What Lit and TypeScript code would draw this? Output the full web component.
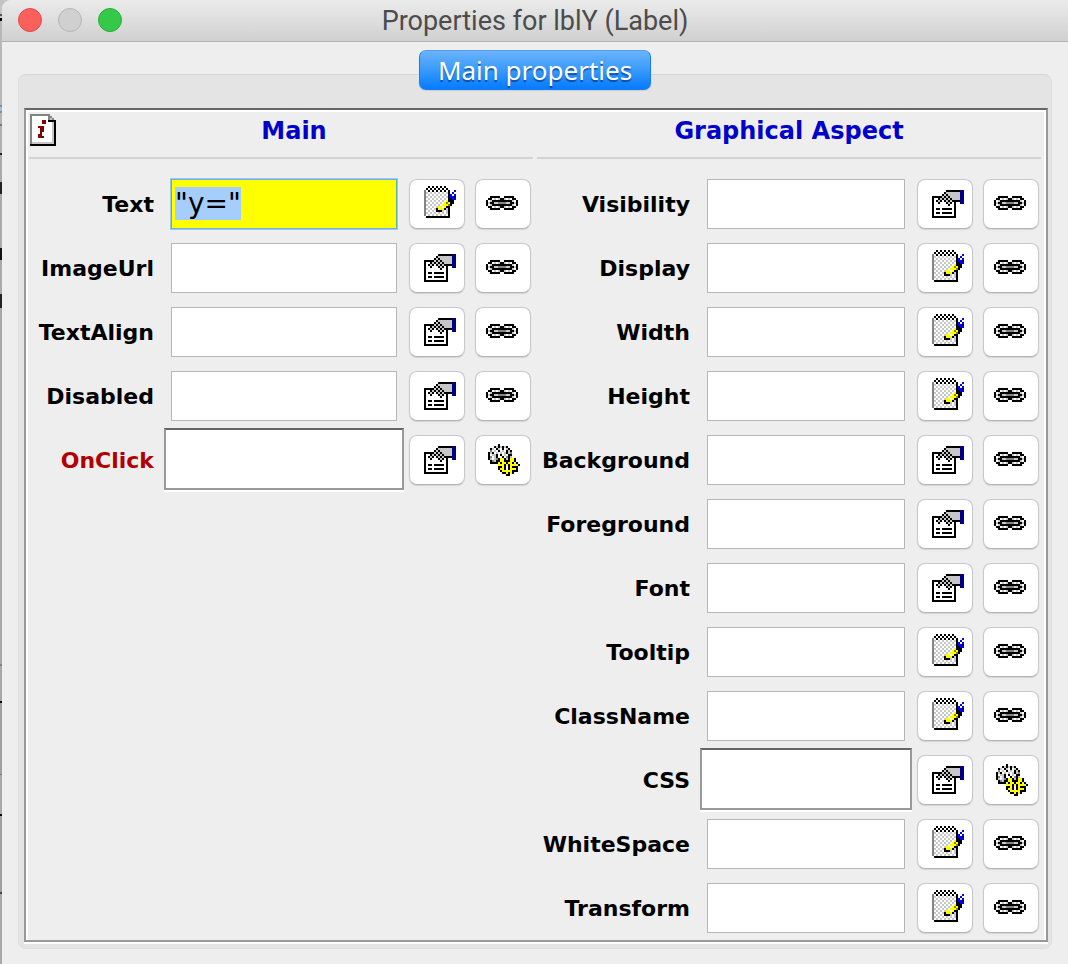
import { LitElement, html, css, svg } from "lit";
import { customElement, property, query } from "lit/decorators.js";
import { classMap } from "lit/directives/class-map.js";

type IconName = "info" | "notepad" | "card" | "link" | "gears";

interface Prop {
  name: string;
  editor: IconName;
  action?: boolean;
  value?: string;
}

const PALETTE: Record<string, string> = {
  K: "#000000",
  G: "#848484",
  C: "#c6c6c6",
  W: "#ffffff",
  Y: "#ffff00",
  O: "#848400",
  B: "#0000ff",
  N: "#000084",
  R: "#840000",
};

const ICONS: Record<IconName, string[]> = {
  info: [
    "GGGGGGGGGG...",
    "GWWWWWWWWGG..",
    "GWWWWWWWWGCG.",
    "GWWWWWRRWKKKK",
    "GWWWWWRRWWWCK",
    "GWWWWWWWWWWCK",
    "GWWWRRRWWWWCK",
    "GWWWWRRWWWWCK",
    "GWWWWRRWWWWCK",
    "GWWWWRWWWWWCK",
    "GWWWRRWWWWWCK",
    "GWWWRRRWWWWCK",
    "GWWWWWWWWWWCK",
    "GWWWWWWWWWWCK",
    "GCCCCCCCCCCCK",
    "KKKKKKKKKKKKK",
  ],
  notepad: [
    "..K.K.K.K.K.....",
    ".K.K.K.K.K.K....",
    "GWKWKWKWKWKWK..B",
    "GCWCWCWCWCWCK.B.",
    "GWCWCWCWCWCWKBWB",
    "GCWCWCWCWCWCKBBN",
    "GWCWCWCWCWCWKKBB",
    "GCWCWCWCWCWYKKK.",
    "GWCWCWCWCWYOYKK.",
    "GCWCWCWCWYYYOK..",
    "GWCWCWCYYWYKK...",
    "GCWCWCKYYYKCK...",
    "GWCWCWKKKCWCK...",
    "GCWCWCWCWCWCK...",
    "GWCWCWCWCWCWK...",
    ".KKKKKKKKKKKK...",
  ],
  card: [
    "................",
    "................",
    ".......KKKKKKKNN",
    "......KCCCCCCCNN",
    ".....KCKCCCCCCNN",
    "KKKKKCKCKCCCCCNN",
    "KWWKCKCKCKCCCCNN",
    "KWKCKWKCKCKKKKNN",
    "KWWKWWWKCKWK..NN",
    "KWWWWWWWKWWK....",
    "KWWWWWWWWWWK....",
    "KWKKWKKKKKWK....",
    "KWWWWWWWWWWK....",
    "KWKKWKKKKKWK....",
    "KWWWWWWWWWWK....",
    "KKKKKKKKKKKK....",
  ],
  link: [
    "................",
    "................",
    "................",
    "................",
    "................",
    "..KKKKK..KKKKK..",
    ".KKWCWCKKCWCWKK.",
    "KWCKKKKKKKKKKCWK",
    "KCKKCCGGGGCCKKCK",
    "KWCKKKKKKKKKKCWK",
    ".KKWCWCKKCWCWKK.",
    "..KKKKK..KKKKK..",
    "................",
    "................",
    "................",
    "................",
  ],
  gears: [
    ".....K..........",
    "...KCKCKCK......",
    ".KCWKCWKWCK.....",
    ".GWCWKWCWKCK....",
    "KCKWCWCWCKCG....",
    "KWCCK.KWCWKK....",
    "KGWCK..K.GKC....",
    "KCWCGKYYKCKYYK..",
    ".KGCKKYYKKKYYK..",
    ".KKKKYKYYKYYKYK.",
    ".....YYYKYKYYYYK",
    ".....KKYKWKYKKK.",
    ".....KYYKWKYYYK.",
    "......KYYYYYKKK.",
    ".......KKYKYK...",
    ".........KK.....",
  ],
};

const MAIN: Prop[] = [
  { name: "Text", editor: "notepad", value: '"y="' },
  { name: "ImageUrl", editor: "card" },
  { name: "TextAlign", editor: "card" },
  { name: "Disabled", editor: "card" },
  { name: "OnClick", editor: "card", action: true },
];

const GRAPHICAL: Prop[] = [
  { name: "Visibility", editor: "card" },
  { name: "Display", editor: "notepad" },
  { name: "Width", editor: "notepad" },
  { name: "Height", editor: "notepad" },
  { name: "Background", editor: "card" },
  { name: "Foreground", editor: "card" },
  { name: "Font", editor: "card" },
  { name: "Tooltip", editor: "notepad" },
  { name: "ClassName", editor: "notepad" },
  { name: "CSS", editor: "card", action: true },
  { name: "WhiteSpace", editor: "notepad" },
  { name: "Transform", editor: "notepad" },
];

/** Draws a bitmap icon, each cell two pixels wide. */
@customElement("pixel-icon")
export class PixelIcon extends LitElement {
  static styles = css`
    :host {
      display: block;
      line-height: 0;
    }
  `;

  @property() name: IconName = "link";

  render() {
    const rows = ICONS[this.name];
    const w = rows[0].length;
    const h = rows.length;
    const cells = rows.flatMap((row, y) =>
      [...row].map((c, x) =>
        c === "."
          ? null
          : svg`<rect x=${x} y=${y} width="1" height="1" fill=${PALETTE[c]}></rect>`
      )
    );
    return html`<svg
      width=${w * 2}
      height=${h * 2}
      viewBox="0 0 ${w} ${h}"
      shape-rendering="crispEdges"
      aria-hidden="true"
    >
      ${cells}
    </svg>`;
  }
}

@customElement("property-row")
export class PropertyRow extends LitElement {
  static styles = css`
    :host {
      display: block;
    }
    .row {
      display: flex;
      align-items: center;
      height: 64px;
    }
    .label {
      flex: none;
      box-sizing: border-box;
      width: var(--label-width);
      margin-right: 10px;
      padding-top: 2px;
      text-align: right;
      white-space: nowrap;
      font: bold 22px/32px "DejaVu Sans", sans-serif;
      color: #000;
    }
    .event {
      color: #b20000;
    }
    .cell {
      flex: 1;
      min-width: 0;
      display: flex;
      align-self: stretch;
      align-items: center;
      padding: 0 7px;
      margin-right: 5px;
    }
    .cell.action {
      align-items: flex-start;
      padding: 0;
    }
    .field {
      flex: 1;
      min-width: 0;
      box-sizing: border-box;
      height: 50px;
      margin: 0;
      padding: 0 3px 2px;
      border: 1px solid #b4b4b4;
      border-radius: 0;
      background: #fff;
      outline: none;
      color: #000;
      font: 28px "DejaVu Sans", sans-serif;
    }
    .filled {
      background: #ff0;
      border-color: #62b0a0;
      border-top-color: #6fb1f0;
      border-bottom-color: #6fb1f0;
      box-shadow: 0 0 0 1px #9cc8f0;
    }
    .field::selection {
      background: rgba(164, 205, 255, 0.99);
      color: #000;
    }
    .action .field {
      height: 62px;
      border: 2px solid #999;
      border-top-color: #666;
      box-shadow: 0 2px 0 #fff;
    }
    .tool {
      flex: none;
      display: flex;
      align-items: flex-start;
      box-sizing: border-box;
      width: 56px;
      height: 50px;
      margin: 0 10px 0 0;
      padding: 6px 0 0 14px;
      border: 1px solid #c8c8c8;
      border-bottom-color: #b4b4b4;
      border-radius: 8px;
      background: #fff;
      box-shadow: 0 1px 1px #d4d4d4;
    }
    .tool.binding {
      margin-right: 2px;
      padding-left: 10px;
    }
    .tool.gear {
      padding: 8px 0 0 12px;
    }
  `;

  @property({ attribute: false }) prop!: Prop;
  @property({ attribute: false }) event = false;
  @query("input") input!: HTMLInputElement;

  firstUpdated() {
    if (this.prop.value) {
      this.input.focus();
      this.input.select();
    }
  }

  render() {
    const { name, editor, action, value } = this.prop;
    return html`
      <div class="row">
        <label for="field" class=${classMap({ label: true, event: this.event })}>${name}</label>
        <div class=${classMap({ cell: true, action: !!action })}>
          <input
            id="field"
            type="text"
            class=${classMap({ field: true, filled: !!value })}
            autocomplete="off"
            spellcheck="false"
            .value=${value ?? ""}
          />
        </div>
        <button class="tool" type="button" aria-label="Edit ${name}">
          <pixel-icon .name=${editor}></pixel-icon>
        </button>
        <button
          class=${classMap({ tool: true, binding: true, gear: !!action })}
          type="button"
          aria-label="Bind ${name}"
        >
          <pixel-icon .name=${action ? "gears" : "link"}></pixel-icon>
        </button>
      </div>
    `;
  }
}

@customElement("app-root")
export class AppRoot extends LitElement {
  static styles = css`
    :host {
      display: block;
      min-height: 100vh;
      box-sizing: border-box;
      padding-left: 2px;
      background: linear-gradient(
        #c4c4c4 0 14px,
        #555 14px 16px,
        #c4c4c4 16px 18px,
        #000 18px 21px,
        #b8b8b8 21px 105px,
        #5a9ab4 105px 107px,
        #b8b8b8 107px 111px,
        #5a9ab4 111px 113px,
        #b4b4b4 113px 124px,
        #777 124px 126px,
        #b0b0b0 126px 153px,
        #222 153px 155px,
        #aaa 155px 182px,
        #222 182px 194px,
        #aaa 194px 248px,
        #111 248px 260px,
        #aaa 260px 294px,
        #222 294px 308px,
        #a8a8a8 308px 664px,
        #808080 664px 666px,
        #a8a8a8 666px 701px,
        #000 701px 703px,
        #a0a0a0 703px 774px,
        #777 774px 775px,
        #a8a8a8 775px 814px,
        #000 814px 816px,
        #a0a0a0 816px 892px,
        #444 892px 894px,
        #a8a8a8 894px
      );
    }
    .window {
      min-height: 100vh;
      background: #eee;
      border-top-left-radius: 9px;
      overflow: hidden;
    }
    .titlebar {
      display: grid;
      grid-template-columns: 1fr auto 1fr;
      align-items: center;
      box-sizing: border-box;
      height: 42px;
      padding: 0 16px 1px;
      border-bottom: 1px solid #b1b1b1;
      background: linear-gradient(#ebebeb, #d0d0d0);
    }
    .lights {
      display: flex;
      gap: 16px;
    }
    .light {
      width: 24px;
      height: 24px;
      padding: 0;
      border-radius: 50%;
      border: 1px solid #e24b47;
      background: #fc605c;
    }
    .light.off {
      border-color: #b4b4b4;
      background: #d0d0d0;
    }
    .light.zoom {
      border-color: #2aac37;
      background: #35c94a;
    }
    .title {
      margin: 0;
      padding-top: 2px;
      font: 27px/32px Roboto, Inter, sans-serif;
      color: #4c4c4c;
      white-space: nowrap;
    }
    .tabs {
      display: flex;
      justify-content: center;
      height: 40px;
      margin-top: 8px;
    }
    .tab {
      position: relative;
      box-sizing: border-box;
      height: 40px;
      width: 232px;
      padding: 0;
      border: 1px solid #1a7cf5;
      border-top-color: #4f9cf2;
      border-radius: 7px;
      background: linear-gradient(#6bb3fb, #389afc 50%, #057bff);
      box-shadow: 0 1px 1px #c8ccd4;
      color: #fff;
      font: 26px/32px "Noto Sans", "Open Sans", sans-serif;
      text-shadow: 0 2px 1px rgba(0, 40, 90, 0.6);
      white-space: nowrap;
    }
    .panel {
      margin: -16px 16px 16px;
      padding: 33px 3px 6px 5px;
      border: 1px solid #d6d6d6;
      border-left-color: #dedede;
      border-right-color: #dedede;
      border-bottom-color: #e0e0e0;
      border-radius: 8px;
      background: #e4e4e4;
    }
    .sheet {
      display: grid;
      grid-template-columns: 1fr 1fr;
      gap: 4px;
      padding: 2px 5px 0 3px;
      border: 2px solid #999;
      border-top-color: #666;
      background: #eee;
      box-shadow: inset 2px 2px 0 #fff, inset -2px 0 0 #fff, 0 2px 0 #fff;
    }
    .group {
      min-width: 0;
    }
    .main {
      --label-width: 125px;
    }
    .graphical {
      --label-width: 153px;
    }
    .head {
      display: flex;
      align-items: flex-start;
      box-sizing: border-box;
      height: 47px;
      padding: 2px 1px;
      border-bottom: 2px solid #d3d3d3;
      margin-bottom: 13px;
    }
    .info {
      padding: 0;
      border: 0;
      background: none;
    }
    .caption {
      flex: 1;
      margin: 0;
      text-align: center;
      font: bold 24px/34px "DejaVu Sans", sans-serif;
      color: #0000cd;
    }
  `;

  private group(kind: "main" | "graphical", caption: string, props: Prop[]) {
    return html`
      <section class="group ${kind}" aria-label=${caption}>
        <div class="head">
          ${kind === "main"
            ? html`<button class="info" type="button" aria-label="Information">
                <pixel-icon .name=${"info"}></pixel-icon>
              </button>`
            : null}
          <h2 class="caption">${caption}</h2>
        </div>
        ${props.map(
          (p) => html`<property-row
            .prop=${p}
            .event=${kind === "main" && !!p.action}
          ></property-row>`
        )}
      </section>
    `;
  }

  render() {
    return html`
      <main class="window">
        <header class="titlebar">
          <div class="lights">
            <button class="light" type="button" aria-label="Close"></button>
            <button class="light off" type="button" aria-label="Minimize"></button>
            <button class="light zoom" type="button" aria-label="Zoom"></button>
          </div>
          <h1 class="title">Properties for lblY (Label)</h1>
        </header>
        <div class="tabs" role="tablist">
          <button class="tab" type="button" role="tab" aria-selected="true">Main properties</button>
        </div>
        <div class="panel" role="tabpanel">
          <div class="sheet">
            ${this.group("main", "Main", MAIN)}
            ${this.group("graphical", "Graphical Aspect", GRAPHICAL)}
          </div>
        </div>
      </main>
    `;
  }
}
